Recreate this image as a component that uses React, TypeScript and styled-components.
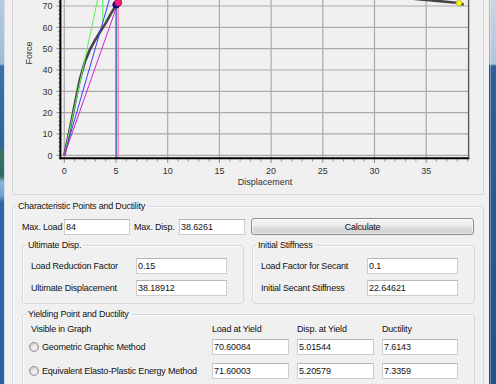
import styled, { createGlobalStyle } from "styled-components";

const UI_FONT = `"Liberation Sans", Arial, sans-serif`;

const GlobalStyle = createGlobalStyle`
  html, body {
    margin: 0;
    padding: 0;
    background: #f0f0f0;
  }
  body {
    font-family: ${UI_FONT};
    font-size: 9px;
    letter-spacing: -0.2px;
    color: #111;
  }
`;

const Window = styled.div`
  display: flex;
  width: 496px;
  height: 384px;
  overflow: hidden;
  background: #f0f0f0;
`;

const LeftFrame = styled.div`
  flex: 0 0 5px;
  background: linear-gradient(
    180deg,
    #b9cbdc 0,
    #a2bad0 64px,
    #3a72ab 66px,
    #2c66a3 146px,
    #3d7560 152px,
    #2f6a63 176px,
    #8db4d8 182px,
    #6f9fcc 196px,
    #2d67a5 202px,
    #2a62a0 100%
  );
  box-shadow: inset -1px 0 0 #d3dee9;
`;

const RightFrame = styled.div`
  flex: 0 0 7px;
  background:
    linear-gradient(
      90deg,
      rgba(0, 0, 0, 0.12) 0,
      rgba(0, 0, 0, 0.12) 1px,
      rgba(255, 255, 255, 0.35) 1px,
      rgba(255, 255, 255, 0.35) 2px,
      transparent 2px
    ),
    linear-gradient(180deg, #c8d7e5 0, #b0c4d7 64px, #2c5f98 66px, #22528b 100%);
`;

const Client = styled.div`
  flex: 1;
  min-width: 0;
  display: flex;
  flex-direction: column;
  padding: 0 5px 0 7px;
`;

const ChartPanel = styled.div`
  flex: 0 0 auto;
  height: 194px;
  border: 1px solid #d6d6d6;
  border-top: none;
  border-radius: 0 0 2px 2px;
  overflow: hidden;
`;

const ChartSvg = styled.svg`
  display: block;
  font-family: ${UI_FONT};
  font-size: 9px;
  letter-spacing: 0;
`;

const GroupBox = styled.fieldset<{ $pad: string; $top?: number }>`
  margin: ${(p) => p.$top ?? 0}px 0 0 0;
  padding: ${(p) => p.$pad};
  min-width: 0;
  border: 1px solid #d5d8dc;
  border-radius: 3px;
  box-shadow: inset 1px 1px 0 #fbfbfb;
`;

const GroupTitle = styled.legend<{ $shift: number }>`
  margin-left: ${(p) => p.$shift}px;
  padding: 0 2px;
  line-height: 12px;
  font-size: 9px;
  color: #111;
`;

const TopRow = styled.div`
  display: grid;
  grid-template-columns: 223px 1fr;
  column-gap: 6px;
  align-items: center;
`;

const MaxFields = styled.div`
  display: flex;
  align-items: center;
`;

const Label = styled.span<{ $w?: number; $indent?: number }>`
  flex: 0 0 auto;
  width: ${(p) => (p.$w ? `${p.$w}px` : "auto")};
  padding-left: ${(p) => p.$indent ?? 0}px;
  box-sizing: border-box;
  white-space: nowrap;
`;

const TextBox = styled.input<{ $w: number }>`
  width: ${(p) => p.$w}px;
  height: 16px;
  box-sizing: border-box;
  margin: 0;
  padding: 0 1px;
  border: 1px solid #cdcdcd;
  border-top-color: #b6b6b6;
  background: #fff;
  font: 9px ${UI_FONT};
  letter-spacing: -0.1px;
  color: #111;
  outline: none;
`;

const Button = styled.button`
  width: 223px;
  height: 17px;
  margin: 0;
  padding: 0;
  border: 1px solid #8c8d8e;
  border-radius: 3px;
  background: linear-gradient(180deg, #f4f4f4 0%, #ececec 48%, #dedede 52%, #d1d1d1 100%);
  box-shadow: inset 0 0 0 1px rgba(255, 255, 255, 0.6);
  font: 9px ${UI_FONT};
  letter-spacing: -0.2px;
  color: #111;
`;

const SubGroups = styled.div`
  display: grid;
  grid-template-columns: 222px 223px;
  column-gap: 8px;
  margin-top: 4px;
`;

const FieldGrid = styled.div<{ $label: number }>`
  display: grid;
  grid-template-columns: ${(p) => p.$label}px 91px;
  row-gap: 6px;
  align-items: center;
`;

const YieldGrid = styled.div`
  display: grid;
  grid-template-columns: 173px 77px 77px 76px;
  column-gap: 8px;
  align-items: center;
`;

const HeadCell = styled.span`
  height: 12px;
  line-height: 12px;
  margin-bottom: 4px;
  white-space: nowrap;
`;

const MethodCell = styled.label`
  display: flex;
  align-items: center;
  margin-left: -2px;
  white-space: nowrap;
`;

const Radio = styled.span`
  flex: 0 0 10px;
  height: 10px;
  box-sizing: border-box;
  margin-right: 3px;
  border: 1px solid #949494;
  border-radius: 50%;
  background: radial-gradient(circle at 55% 60%, #f6f6f6 0%, #e4e4e4 40%, #cbcbcb 75%, #dedede 100%);
`;

const YieldRow = styled.div`
  display: contents;
`;

const RowGap = styled.div`
  grid-column: 1 / -1;
  height: 8px;
`;

// chart scale: page px minus panel offset (13)
const X0 = 51.3;
const SX = 10.34;
const Y0 = 155.3;
const SY = 2.133;
const px = (d: number) => X0 + SX * d;
const py = (f: number) => Y0 - SY * f;
const AXIS_L = 47.4;
const AXIS_B = 158.2;
const PLOT_R = 455.6;

const curve: [number, number][] = [
  [0, 0], [0.5, 11.5], [1, 23.5], [1.5, 35.5], [2, 44], [2.5, 49.8], [3, 54.2],
  [3.5, 58.2], [4, 62], [4.5, 66.3], [5, 70.3], [5.5, 74], [6, 77], [7, 80.5],
  [8, 82.8], [9, 83.8], [10, 84], [38.19, 71.4], [38.63, 70.6],
];

const toPts = (list: [number, number][]) =>
  list.map(([d, f]) => `${px(d).toFixed(1)},${py(f).toFixed(1)}`).join(" ");

const xMajor = [0, 5, 10, 15, 20, 25, 30, 35];
const yMajor = [0, 10, 20, 30, 40, 50, 60, 70, 80];
const yLabels = [0, 10, 20, 30, 40, 50, 60, 70];
const xMinor = Array.from({ length: 40 }, (_, i) => i).filter((i) => i % 5 !== 0);
const yMinor = Array.from({ length: 45 }, (_, i) => i * 2).filter((f) => f % 10 !== 0);

const Chart = () => (
  <ChartSvg width={470} height={194} viewBox="0 0 470 194">
    {xMajor.map((d) => (
      <line key={`gx${d}`} x1={px(d)} x2={px(d)} y1={-30} y2={AXIS_B} stroke="#a9a9a9" strokeWidth={1.2} />
    ))}
    {yMajor.map((f) => (
      <line key={`gy${f}`} x1={AXIS_L} x2={PLOT_R} y1={py(f)} y2={py(f)} stroke="#a9a9a9" strokeWidth={1.2} />
    ))}
    {xMajor.map((d) => (
      <line key={`tx${d}`} x1={px(d)} x2={px(d)} y1={AXIS_B} y2={163} stroke="#8a8a8a" strokeWidth={1} />
    ))}
    {xMinor.map((d) => (
      <line key={`mx${d}`} x1={px(d)} x2={px(d)} y1={AXIS_B} y2={161.5} stroke="#9a9a9a" strokeWidth={1} />
    ))}
    {yMajor.map((f) => (
      <line key={`ty${f}`} x1={43.5} x2={AXIS_L} y1={py(f)} y2={py(f)} stroke="#8a8a8a" strokeWidth={1} />
    ))}
    {yMinor.map((f) => (
      <line key={`my${f}`} x1={45} x2={AXIS_L} y1={py(f)} y2={py(f)} stroke="#9a9a9a" strokeWidth={1} />
    ))}

    <polyline points={toPts(curve)} fill="none" stroke="#454545" strokeWidth={2.6} strokeLinejoin="round" />
    <polyline points={toPts([[0, 0], [3.709, 84], [3.709, 62.2]])} fill="none" stroke="#5cf05c" strokeWidth={1} />
    <line x1={px(0)} y1={py(0)} x2={px(5.015)} y2={py(84)} stroke="#3b3bff" strokeWidth={1} />
    <line x1={px(0)} y1={py(0)} x2={px(5.206)} y2={py(71.6)} stroke="#d21fd2" strokeWidth={1} />
    <line x1={px(5.015)} y1={-10} x2={px(5.015)} y2={AXIS_B} stroke="#3a6fc4" strokeWidth={1.3} />
    <line x1={px(5.206)} y1={-10} x2={px(5.206)} y2={AXIS_B} stroke="#ff6aa8" strokeWidth={1.3} />
    <circle cx={px(5.015)} cy={py(70.6)} r={3.4} fill="#1010b0" stroke="#000050" strokeWidth={0.8} />
    <circle cx={px(5.206)} cy={py(71.6)} r={3.6} fill="#ff1f7a" stroke="#7a0030" strokeWidth={0.8} />
    <polygon
      points={`${px(38.19)},${py(71.4) - 3.6} ${px(38.19) + 3.6},${py(71.4)} ${px(38.19)},${py(71.4) + 3.6} ${px(38.19) - 3.6},${py(71.4)}`}
      fill="#ffff00"
      stroke="#8a8a00"
      strokeWidth={0.7}
    />

    <line x1={AXIS_L} x2={AXIS_L} y1={-30} y2={AXIS_B + 1} stroke="#000" strokeWidth={2} />
    <line x1={AXIS_L - 1} x2={PLOT_R + 0.8} y1={AXIS_B} y2={AXIS_B} stroke="#000" strokeWidth={2} />
    <line x1={PLOT_R} x2={PLOT_R} y1={-30} y2={AXIS_B} stroke="#5a5a5a" strokeWidth={1.4} />

    {xMajor.map((d) => (
      <text key={`lx${d}`} x={px(d)} y={174} textAnchor="middle" fill="#333">
        {d}
      </text>
    ))}
    {yLabels.map((f) => (
      <text key={`ly${f}`} x={39.6} y={py(f) + 3.2} textAnchor="end" fill="#333">
        {f}
      </text>
    ))}
    <text x={252} y={184.8} textAnchor="middle" fill="#333">
      Displacement
    </text>
    <text x={15.5} y={53} textAnchor="middle" fill="#333" transform="rotate(-90 15.5 53) translate(0 3.2)">
      Force
    </text>
  </ChartSvg>
);

const yieldRows = [
  { method: "Geometric Graphic Method", load: "70.60084", disp: "5.01544", duct: "7.6143" },
  { method: "Equivalent Elasto-Plastic Energy Method", load: "71.60003", disp: "5.20579", duct: "7.3359" },
];

const App = () => (
  <>
    <GlobalStyle />
    <Window>
      <LeftFrame />
      <Client>
        <ChartPanel>
          <Chart />
        </ChartPanel>

        <GroupBox $pad="6px 8px 8px 9px" $top={5}>
          <GroupTitle $shift={-6}>Characteristic Points and Ductility</GroupTitle>
          <TopRow>
            <MaxFields>
              <Label $w={42}>Max. Load</Label>
              <TextBox $w={66} readOnly value="84" />
              <Label $w={49} $indent={4}>Max. Disp.</Label>
              <TextBox $w={66} readOnly value="38.6261" />
            </MaxFields>
            <Button type="button">Calculate</Button>
          </TopRow>

          <SubGroups>
            <GroupBox $pad="7px 8px 7px 8px">
              <GroupTitle $shift={-5}>Ultimate Disp.</GroupTitle>
              <FieldGrid $label={105}>
                <Label>Load Reduction Factor</Label>
                <TextBox $w={91} readOnly value="0.15" />
                <Label>Ultimate Displacement</Label>
                <TextBox $w={91} readOnly value="38.18912" />
              </FieldGrid>
            </GroupBox>
            <GroupBox $pad="7px 8px 7px 8px">
              <GroupTitle $shift={-5}>Initial Stiffness</GroupTitle>
              <FieldGrid $label={106}>
                <Label>Load Factor for Secant</Label>
                <TextBox $w={91} readOnly value="0.1" />
                <Label>Initial Secant Stiffness</Label>
                <TextBox $w={91} readOnly value="22.64621" />
              </FieldGrid>
            </GroupBox>
          </SubGroups>

          <GroupBox $pad="3px 8px 8px 8px" $top={4}>
            <GroupTitle $shift={-5}>Yielding Point and Ductility</GroupTitle>
            <YieldGrid>
              <HeadCell>Visible in Graph</HeadCell>
              <HeadCell>Load at Yield</HeadCell>
              <HeadCell>Disp. at Yield</HeadCell>
              <HeadCell>Ductility</HeadCell>
              {yieldRows.map((r, i) => (
                <YieldRow key={r.method}>
                  {i > 0 && <RowGap />}
                  <MethodCell>
                    <Radio />
                    {r.method}
                  </MethodCell>
                  <TextBox $w={77} readOnly value={r.load} />
                  <TextBox $w={77} readOnly value={r.disp} />
                  <TextBox $w={76} readOnly value={r.duct} />
                </YieldRow>
              ))}
            </YieldGrid>
          </GroupBox>
        </GroupBox>
      </Client>
      <RightFrame />
    </Window>
  </>
);

export default App;
